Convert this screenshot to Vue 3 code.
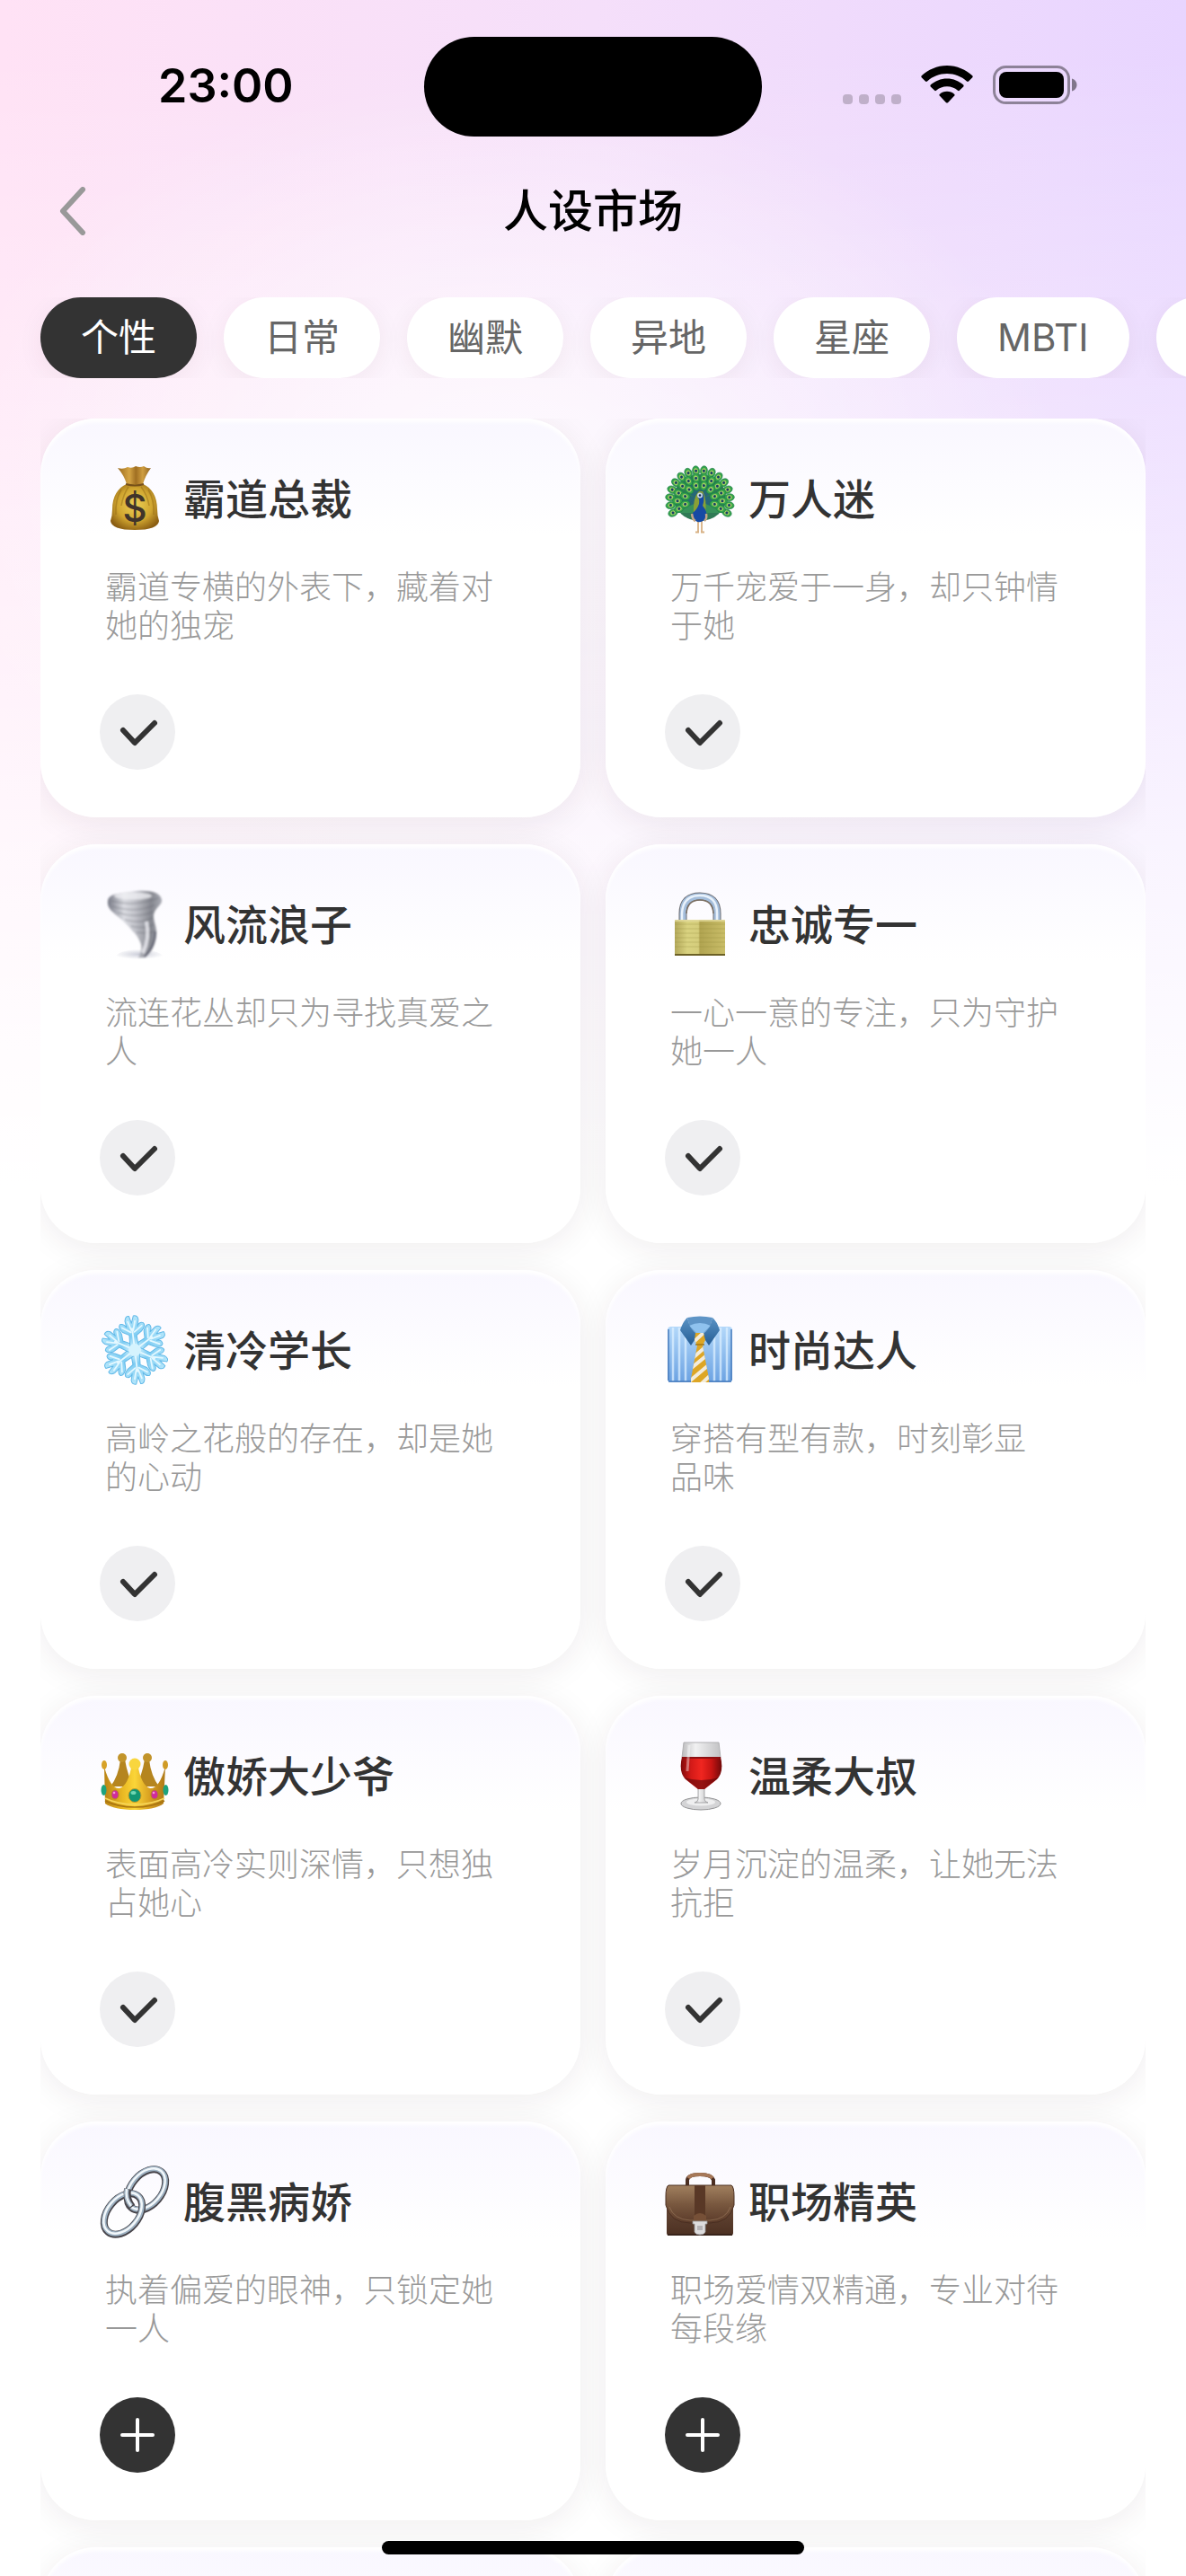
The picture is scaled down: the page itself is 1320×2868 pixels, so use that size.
<template>
  <main class="page">
    <!-- STATUS BAR -->
    <div class="status">
      <span class="status-time">23:00</span>
      <span class="island"></span>
      <div class="status-icons">
        <span class="signal"><i v-for="n in 4" :key="n"></i></span>
        <svg class="wifi" viewBox="0 0 58 43" aria-hidden="true">
          <path d="M29 0C40 0 50 4.500 57.500 11.500Q58 12.500 57.300 13.300L53 17.600Q52 18.400 51 17.500C45 12 37.500 9 29 9S13 12 7 17.500Q6 18.400 5 17.600L.7 13.300Q0 12.500.5 11.500C8 4.500 18 0 29 0Z" />
          <path d="M29 14.500C36 14.500 42.500 17.200 47.300 21.600Q48 22.500 47.300 23.400L42.800 27.800Q41.900 28.500 41 27.700C37.700 24.800 33.600 23.200 29 23.200S20.300 24.800 17 27.700Q16.100 28.500 15.200 27.800L10.700 23.400Q10 22.500 10.700 21.600C15.500 17.200 22 14.500 29 14.500Z" />
          <path d="M29 28.800C32.200 28.800 35 30 37.300 31.900Q38 32.800 37.300 33.600L30 41.200Q29 42 28 41.200L20.700 33.600Q20 32.800 20.700 31.900C23 30 25.800 28.800 29 28.800Z" />
        </svg>
        <svg class="battery" viewBox="0 0 94 43" aria-hidden="true">
          <rect x="1.500" y="1.500" width="83" height="40" rx="13" fill="none" stroke="#000" stroke-opacity=".4" stroke-width="3" />
          <rect x="7" y="7" width="72" height="29" rx="8" />
          <path d="M88 14.500C91.500 15.500 93.500 18.500 93.500 21.500S91.500 27.500 88 28.500Z" fill-opacity=".45" />
        </svg>
      </div>
    </div>

    <!-- NAV -->
    <header class="nav">
      <button class="back" type="button" aria-label="返回">
        <svg viewBox="0 0 30 54" aria-hidden="true"><path d="M26 3 4 27 26 51" /></svg>
      </button>
      <h1 class="nav-title">人设市场</h1>
    </header>

    <nav class="tabs">
      <button
        v-for="tab in tabs"
        :key="tab"
        type="button"
        class="tab"
        :class="{ 'tab--active': tab === activeTab }"
        @click="activeTab = tab"
      >
        {{ tab }}
      </button>
      <span class="tab tab--next"></span>
    </nav>

    <!-- PERSONA LIST -->
    <section class="grid">
      <article v-for="item in personas" :key="item.name" class="card">
        <div class="card-head">
          <svg class="emoji" viewBox="0 0 78 78" aria-hidden="true">
            <template v-if="item.icon === 'bag'">
              <defs>
                <radialGradient id="bagBody" cx=".5" cy=".45" r=".6">
                  <stop offset="0" stop-color="#ecd055" />
                  <stop offset=".6" stop-color="#d0a52f" />
                  <stop offset="1" stop-color="#8a5d12" />
                </radialGradient>
                <linearGradient id="bagTop">
                  <stop offset="0" stop-color="#9a6a1e" />
                  <stop offset=".35" stop-color="#d4a444" />
                  <stop offset=".55" stop-color="#a06f22" />
                  <stop offset=".75" stop-color="#cf9d40" />
                  <stop offset="1" stop-color="#8f6320" />
                </linearGradient>
              </defs>
              <path d="M20 4Q26 6 31 3Q36 5 40 2Q45 4 49 2Q53 5 57 4Q51 12 48 22L30 22Q27 12 20 4Z" fill="url(#bagTop)" />
              <path d="M30 22H48C58 26 64 36 64 50Q64 57 66 63Q65 73 39 73Q13 73 12 63Q14 57 14 50C14 36 20 26 30 22Z" fill="url(#bagBody)" />
              <path d="M24 28Q17 40 18 56M32 25Q26 34 24 46M46 25Q53 34 55 46M54 28Q61 40 60 56" fill="none" stroke="#8f6615" stroke-opacity=".45" stroke-width="1.500" />
              <path d="M29 22Q39 25 49 22" fill="none" stroke="#76501a" stroke-width="2" />
              <text class="dollar" x="39" y="64" text-anchor="middle">$</text>
            </template>

            <template v-else-if="item.icon === 'peacock'">
              <ellipse cx="39" cy="37" rx="29" ry="26" fill="#2f7a55" />
              <path d="M14 54H64L56 44H22Z" fill="#37915a" />
              <g v-for="(f, i) in feathers" :key="i" :transform="`translate(39 40) rotate(${f.angle})`">
                <path :d="`M0 0V${-f.r}`" stroke="#27667a" stroke-width="1.500" />
                <ellipse :cy="-f.r" rx="4" ry="5.500" fill="#35a44c" stroke="#1c7b46" stroke-width=".6" />
                <ellipse :cy="-f.r" rx="2.400" ry="3" fill="#a5cf62" />
                <circle :cy="-f.r" r="1.500" fill="#173f68" />
              </g>
              <path d="M38 30Q31 36 32 56L45 57Q47 38 42 30Z" fill="#8aa036" />
              <path d="M37 62V75M41 62V75M34 75.500H38M40 75.500H44" stroke="#d8b184" stroke-width="1.800" />
              <path d="M36 34Q40 29 43 34Q44 41 42 46Q48 53 46 60Q42 65 36 64Q30 61 31 54Q36 50 38 44Q39 38 36 36Z" fill="#164aa3" />
              <path d="M30 55Q31 62 34 63M46 55Q47 61 44 63" fill="none" stroke="#c6a786" stroke-width="2.500" />
              <circle cx="39" cy="34.500" r="3" fill="#c9d9e6" />
              <circle cx="39" cy="34.500" r="1.300" fill="#122a54" />
            </template>

            <template v-else-if="item.icon === 'tornado'">
              <defs>
                <linearGradient id="windBody">
                  <stop offset="0" stop-color="#777985" />
                  <stop offset=".3" stop-color="#dcdde3" />
                  <stop offset=".5" stop-color="#c3c4cb" />
                  <stop offset=".8" stop-color="#85878f" />
                  <stop offset="1" stop-color="#a9abb4" />
                </linearGradient>
                <filter id="windSoft"><feGaussianBlur stdDeviation="1" /></filter>
                <radialGradient id="windDust">
                  <stop offset="0" stop-color="#b9bccb" />
                  <stop offset="1" stop-color="#b9bccb" stop-opacity="0" />
                </radialGradient>
              </defs>
              <path d="M16 77A25 10 0 0 1 72 77Z" fill="url(#windDust)" fill-opacity=".7" />
              <g filter="url(#windSoft)">
                <path d="M9 12C10 3 26 3 42 1C60 0 68 4 69 11C70 17 60 20 60 29C60 36 64 42 63 50C62 62 57 70 50 75H43C47 68 47 62 45 58C42 51 40 49 36 45C32 40 26 34 21 30C14 24 8 20 9 12Z" fill="url(#windBody)" />
                <path d="M13 12Q38 19 65 9M14 18Q38 26 61 17M20 25Q40 32 60 24M28 33Q44 38 59 31M35 40Q50 44 60 38M41 47Q52 49 61 46" fill="none" stroke="#64666f" stroke-opacity=".35" stroke-width="1.500" />
                <path d="M62 46Q62 62 50 74" fill="none" stroke="#5e6070" stroke-width="2" />
                <path d="M52 35Q56 54 48 70" fill="none" stroke="#f3f3f8" stroke-width="4" stroke-opacity=".75" />
                <ellipse cx="37" cy="6.500" rx="21" ry="4" fill="#f1f1f5" fill-opacity=".75" />
              </g>
            </template>

            <template v-else-if="item.icon === 'lock'">
              <defs>
                <linearGradient id="lockBody">
                  <stop offset="0" stop-color="#b3a85a" />
                  <stop offset=".25" stop-color="#d9d280" />
                  <stop offset=".47" stop-color="#d5cd7c" />
                  <stop offset=".5" stop-color="#b1a451" />
                  <stop offset="1" stop-color="#c9bd68" />
                </linearGradient>
              </defs>
              <path d="M20 36V26Q20 7 39 7T58 26V36" fill="none" stroke="#6d6c70" stroke-width="9" />
              <path d="M20 36V26Q20 7 39 7T58 26V36" fill="none" stroke="#a3bddb" stroke-width="7" />
              <path d="M19 36V26Q20 6 39 6T58 26V36" fill="none" stroke="#e9f2fb" stroke-width="2.500" />
              <path d="M24 26Q25 11 39 11T54 26" fill="none" stroke="#7b6f62" stroke-width="1.500" />
              <rect x="11" y="33" width="56" height="40" rx="1" fill="url(#lockBody)" />
              <path d="M11 38H67M11 43H67M11 48H67M11 53H67M11 58H67M11 63H67" stroke="#8f8438" stroke-opacity=".3" />
              <path d="M11 34H67" stroke="#e4dda0" stroke-width="1.500" />
              <path d="M11 71H67V73H11Z" fill="#6b6025" />
            </template>

            <template v-else-if="item.icon === 'snow'">
              <defs>
                <radialGradient id="snowArm" gradientUnits="userSpaceOnUse" cx="0" cy="0" r="38">
                  <stop offset="0" stop-color="#eafaff" />
                  <stop offset=".4" stop-color="#7fcdf3" />
                  <stop offset="1" stop-color="#b4e6fb" />
                </radialGradient>
              </defs>
              <g v-for="n in 6" :key="n" :transform="`translate(39 38) rotate(${n * 60 - 7})`">
                <g fill="url(#snowArm)" stroke="#62b9e8" stroke-width="1" stroke-linejoin="round">
                  <path d="M-5 0 -4 -17 -11 -21Q-16 -27 -13 -30Q-9 -31 -6 -26L-7 -33Q-6 -39 -2 -38L0 -30 3 -38Q8 -38 8 -33L6 -26Q9 -31 13 -29Q16 -26 10 -20L4 -16 5 0Z" />
                </g>
                <path d="M0 -4V-24M-1 -22 -4 -32M1 -22 4 -32M-2 -20 -11 -26M2 -20 11 -26" fill="none" stroke="#e4f8ff" stroke-width="1.800" stroke-linecap="round" />
              </g>
              <circle cx="39" cy="38" r="7" fill="#d5f3fe" />
            </template>

            <template v-else-if="item.icon === 'shirt'">
              <defs>
                <linearGradient id="shirtBody" x2="0" y2="1">
                  <stop offset="0" stop-color="#b3d8fa" />
                  <stop offset="1" stop-color="#6ba2e2" />
                </linearGradient>
                <linearGradient id="shirtCollar" x2="0" y2="1">
                  <stop offset="0" stop-color="#5a93c5" />
                  <stop offset="1" stop-color="#245c94" />
                </linearGradient>
                <clipPath id="tieShape">
                  <path d="M34 19H43L45 27 42 33 49 70V74H29V70L36 33 33 27Z" />
                </clipPath>
              </defs>
              <rect x="3" y="12" width="72" height="62" rx="4" fill="url(#shirtBody)" />
              <path d="M9 13V73M16 13V73M23 20V73M55 20V73M62 13V73M69 13V73" stroke="#dcefff" stroke-opacity=".75" stroke-width="2.500" />
              <path d="M4 15V72M74 15V72M4 73H74" stroke="#4b7dbd" stroke-width="1.500" />
              <path d="M25 2Q39 -1 53 2L50 14 39 22 28 14Z" fill="#5e94c6" />
              <path d="M27 11Q39 5 51 11L39 23Z" fill="#8fc2ee" />
              <path d="M25 2Q20 6 17 16L29 33 37 21Q28 15 27 9Z" fill="url(#shirtCollar)" />
              <path d="M53 2Q58 6 61 16L49 33 41 21Q50 15 51 9Z" fill="url(#shirtCollar)" />
              <g clip-path="url(#tieShape)">
                <path d="M29 19H49V74H29Z" fill="#dda625" />
                <path d="M31 30 45 17M31 47 47 33M27 60 49 42M27 73 52 52M38 78 53 64" stroke="#f3ecdb" stroke-width="4" />
              </g>
              <path d="M34 32H44" stroke="#a67611" stroke-width="1.500" />
            </template>

            <template v-else-if="item.icon === 'crown'">
              <defs>
                <linearGradient id="crownBody">
                  <stop offset="0" stop-color="#b98315" />
                  <stop offset=".3" stop-color="#e9b823" />
                  <stop offset=".5" stop-color="#fbd538" />
                  <stop offset=".75" stop-color="#d89f20" />
                  <stop offset="1" stop-color="#ae7817" />
                </linearGradient>
              </defs>
              <path d="M12 50Q21 38 23 20H28Q31 38 38 50ZM40 50Q47 38 50 20H55Q57 38 66 50Z" fill="#b5851f" />
              <circle cx="25" cy="18" r="5" fill="#c2942b" />
              <circle cx="53" cy="18" r="5" fill="#c2942b" />
              <path d="M5 28Q12 53 22 52Q32 49 36 24H42Q46 49 56 52Q66 53 73 28L71 69Q62 76 39 76T6 69Z" fill="url(#crownBody)" />
              <ellipse cx="5" cy="26" rx="3" ry="5" fill="#d7a228" />
              <ellipse cx="73" cy="26" rx="3" ry="5" fill="#d09b26" />
              <circle cx="39" cy="25" r="6.500" fill="#f9d63e" />
              <path d="M6 66Q20 73 39 73T72 66" fill="none" stroke="#a97510" stroke-width="1.500" />
              <path d="M6 63Q20 70 39 70T72 63" fill="none" stroke="#f7d558" stroke-width="1.500" />
              <ellipse cx="4.500" cy="54" rx="3" ry="6" fill="#1da37d" />
              <ellipse cx="73.500" cy="54" rx="3" ry="6" fill="#1da37d" />
              <ellipse cx="39" cy="60" rx="7" ry="7.500" fill="#129672" stroke="#c99a29" />
              <ellipse cx="37.500" cy="57" rx="3" ry="2" fill="#6ed6b2" />
              <ellipse cx="17" cy="59" rx="4" ry="5" fill="#cf2c9c" stroke="#b88522" />
              <ellipse cx="61" cy="59" rx="4" ry="5" fill="#cf2c9c" stroke="#b88522" />
              <circle cx="16" cy="57" r="1.300" fill="#f497d2" />
              <circle cx="60" cy="57" r="1.300" fill="#f497d2" />
            </template>

            <template v-else-if="item.icon === 'wine'">
              <defs>
                <linearGradient id="wineRed">
                  <stop offset="0" stop-color="#7e0a0c" />
                  <stop offset=".25" stop-color="#d31a18" />
                  <stop offset=".5" stop-color="#f02620" />
                  <stop offset=".75" stop-color="#c91513" />
                  <stop offset="1" stop-color="#6f0809" />
                </linearGradient>
                <linearGradient id="wineGlass">
                  <stop offset="0" stop-color="#bcbcbe" />
                  <stop offset=".35" stop-color="#f1f1f2" />
                  <stop offset="1" stop-color="#c2c2c4" />
                </linearGradient>
              </defs>
              <ellipse cx="40" cy="69" rx="22" ry="7" fill="#d4d4d6" stroke="#949496" />
              <ellipse cx="40" cy="67.500" rx="16" ry="4" fill="#efeff0" />
              <path d="M37 50H44V64Q44 67 48 68H33Q37 67 37 64Z" fill="url(#wineGlass)" stroke="#98989a" stroke-width=".8" />
              <path d="M21 1H60L62 18H19Z" fill="url(#wineGlass)" stroke="#b0b0b2" />
              <path d="M19 17H62Q66 34 58 42Q48 50 44 53H37Q33 50 23 42Q15 34 19 17Z" fill="url(#wineRed)" />
              <path d="M21 40Q31 48 37 53H44Q50 48 60 40Q50 43 40.500 43T21 40Z" fill="#4d0607" fill-opacity=".55" />
              <path d="M20 18H61" stroke="#8e1012" stroke-width="2" />
              <path d="M27 4 25 33" stroke="#fff" stroke-opacity=".4" stroke-width="3" />
            </template>

            <template v-else-if="item.icon === 'link'">
              <g fill="none">
                <g v-for="c in linkRings" :key="c.x" :transform="`translate(${c.x} ${c.y}) rotate(40)`">
                  <ellipse rx="17" ry="26" stroke="#47444a" stroke-width="8" />
                  <ellipse cx="-.5" cy="-.5" rx="17" ry="26" stroke="#9db1c2" stroke-width="5.500" />
                  <ellipse cx="-1" cy="-.5" rx="17" ry="26" stroke="#f3f8fb" stroke-width="2.500" />
                </g>
                <path d="M31 24Q29 35 36 44" stroke="#48454b" stroke-width="8" />
                <path d="M30 24Q28 35 35 43" stroke="#aabccb" stroke-width="5" />
                <path d="M30 24Q28 35 35 43" stroke="#f3f8fb" stroke-width="2" />
              </g>
            </template>

            <template v-else>
              <defs>
                <linearGradient id="caseBody" x2="0" y2="1">
                  <stop offset="0" stop-color="#765742" />
                  <stop offset="1" stop-color="#4c3022" />
                </linearGradient>
                <linearGradient id="caseFlap" x2="0" y2="1">
                  <stop offset="0" stop-color="#a1805f" />
                  <stop offset=".5" stop-color="#79583f" />
                  <stop offset="1" stop-color="#5b3b2a" />
                </linearGradient>
              </defs>
              <path d="M25 20V14Q26 8 39 8T54 14V20" fill="none" stroke="#4c2f22" stroke-width="4" />
              <path d="M26 12Q28 8 39 8T53 12" fill="none" stroke="#a67858" stroke-width="4" />
              <rect x="2" y="20" width="74" height="56" rx="3" fill="url(#caseBody)" />
              <path d="M4 20H74Q77 22 77 32V42Q72 62 50 62H28Q6 62 1 42V32Q1 22 4 20Z" fill="url(#caseFlap)" stroke="#4a2e21" />
              <path d="M5 44Q10 58 28 59H50Q68 58 73 44" fill="none" stroke="#a48465" stroke-opacity=".55" />
              <path d="M33 20H45V62H33Z" fill="#593826" />
              <path d="M32 62V54Q39 48 46 54V62Z" fill="#765037" />
              <path d="M3 75H75" stroke="#38231a" stroke-width="2" />
              <path d="M31 60H47V63H45V72Q44 75 39 75T33 72V63H31Z" fill="#dddcdd" stroke="#9b999b" stroke-width=".8" />
              <rect x="36" y="65" width="6" height="5" fill="#b5b3b5" />
            </template>
          </svg>
          <h2 class="card-title">{{ item.name }}</h2>
        </div>
        <p class="card-desc">{{ item.desc }}</p>
        <button
          type="button"
          class="pick"
          :class="{ 'pick--add': !item.added }"
          :aria-label="item.added ? '已添加' : '添加'"
          @click="item.added = !item.added"
        >
          <svg viewBox="0 0 84 84" aria-hidden="true">
            <path v-if="item.added" d="M26 40 39 54 61 32" />
            <path v-else d="M42 25V59M25 42H59" />
          </svg>
        </button>
      </article>
      <!-- next row, only its top edge peeks in -->
      <article v-for="n in 2" :key="n" class="card"></article>
    </section>

    <span class="home-bar"></span>
  </main>
</template>

<script setup>
import { reactive, ref } from "vue";

const tabs = ["个性", "日常", "幽默", "异地", "星座", "MBTI"];
const activeTab = ref("个性");

const personas = reactive([
  { name: "霸道总裁", icon: "bag", desc: "霸道专横的外表下，藏着对\n她的独宠", added: true },
  { name: "万人迷", icon: "peacock", desc: "万千宠爱于一身，却只钟情\n于她", added: true },
  { name: "风流浪子", icon: "tornado", desc: "流连花丛却只为寻找真爱之\n人", added: true },
  { name: "忠诚专一", icon: "lock", desc: "一心一意的专注，只为守护\n她一人", added: true },
  { name: "清冷学长", icon: "snow", desc: "高岭之花般的存在，却是她\n的心动", added: true },
  { name: "时尚达人", icon: "shirt", desc: "穿搭有型有款，时刻彰显\n品味", added: true },
  { name: "傲娇大少爷", icon: "crown", desc: "表面高冷实则深情，只想独\n占她心", added: true },
  { name: "温柔大叔", icon: "wine", desc: "岁月沉淀的温柔，让她无法\n抗拒", added: true },
  { name: "腹黑病娇", icon: "link", desc: "执着偏爱的眼神，只锁定她\n一人", added: false },
  { name: "职场精英", icon: "case", desc: "职场爱情双精通，专业对待\n每段缘", added: false },
]);

// peacock tail: three fans of feathers, outermost first
const feathers = [
  { r: 33, count: 16, spread: 115 },
  { r: 25, count: 12, spread: 112 },
  { r: 17, count: 8, spread: 105 },
].flatMap(({ r, count, spread }) =>
  Array.from({ length: count }, (_, i) => ({
    r,
    angle: -spread + (2 * spread * i) / (count - 1),
  }))
);

const linkRings = [
  { x: 52, y: 25 },
  { x: 26, y: 52 },
];
</script>

<style>
body {
  margin: 0;
}
</style>

<style scoped>
.page {
  position: relative;
  display: flex;
  flex-direction: column;
  height: 100vh;
  overflow: hidden;
  background:
    radial-gradient(ellipse 48% 16% at 42% 19%, rgba(255, 255, 255, 0.8), rgba(255, 255, 255, 0.5) 40%, rgba(255, 255, 255, 0)),
    linear-gradient(rgba(255, 255, 255, 0) 2%, rgba(255, 255, 255, 0.3) 16%, rgba(255, 255, 255, 0.75) 33%, #fff 46%),
    linear-gradient(90deg, #ffe2f5, #f5dffa 50%, #e8d5ff);
  color: #333;
  font-family: Inter, "Noto Sans CJK SC", sans-serif;
}

button {
  border: 0;
  padding: 0;
  font: inherit;
  cursor: pointer;
}

/* status bar */
.status {
  display: grid;
  grid-template-columns: 1fr 376px 1fr;
  flex: none;
  height: 176px;
  box-sizing: border-box;
  padding-top: 41px;
  color: #000;
}

.status-time {
  padding-left: 176px;
  font-size: 52px;
  font-weight: 600;
  line-height: 110px;
}

.island {
  height: 111px;
  border-radius: 56px;
  background: #000;
}

.status-icons {
  display: flex;
  justify-content: flex-end;
  gap: 22px;
  height: 43px;
  padding: 32px 121px 0 0;
}

.signal {
  display: flex;
  align-items: flex-end;
  gap: 7px;
}

.signal i {
  width: 11px;
  height: 11px;
  border-radius: 4px;
  background: rgba(0, 0, 0, 0.2);
}

.wifi {
  width: 58px;
  height: 43px;
}

.battery {
  width: 94px;
  height: 43px;
}

/* nav */
.nav {
  display: grid;
  grid-template-columns: 1fr auto 1fr;
  align-items: center;
  flex: none;
  height: 118px;
}

.back {
  justify-self: start;
  margin-left: 66px;
  background: none;
}

.back svg {
  display: block;
  width: 30px;
  height: 54px;
  fill: none;
  stroke: #999;
  stroke-width: 6;
  stroke-linecap: round;
  stroke-linejoin: round;
}

.nav-title {
  margin: 0;
  color: #000;
  font-size: 50px;
  font-weight: 500;
  line-height: 72px;
}

/* tabs */
.tabs {
  display: flex;
  flex: none;
  gap: 30px;
  margin-top: 37px;
  padding-left: 45px;
  overflow: hidden;
}

.tab {
  flex: none;
  height: 90px;
  padding: 0 45px;
  border-radius: 45px;
  background: #fff;
  box-shadow: 0 6px 30px rgba(60, 20, 40, 0.06);
  color: #666;
  font-size: 42px;
  line-height: 90px;
}

.tab--active {
  background: #333;
  color: #fff;
}

.tab--next {
  width: 84px;
}

/* cards */
.grid {
  display: grid;
  grid-template-columns: 1fr 1fr;
  grid-auto-rows: 444px;
  flex: 1;
  gap: 30px 28px;
  min-height: 0;
  margin: 45px 45px 0;
  overflow: hidden;
}

.card {
  box-sizing: border-box;
  padding: 51px 66px 0;
  border-radius: 62px;
  background: linear-gradient(#f9f7ff, #fff 130px);
  box-shadow: 0 6px 36px rgba(50, 25, 35, 0.08), inset 0 4px 4px #fff;
}

.card-head {
  display: flex;
  align-items: center;
  gap: 15px;
  height: 78px;
}

.emoji {
  flex: none;
  width: 78px;
  height: 78px;
  overflow: visible;
}

.dollar {
  fill: #40342a;
  font-family: Inter, sans-serif;
  font-size: 42px;
  font-weight: 500;
}

.card-title {
  margin: 0;
  font-size: 47px;
  font-weight: 500;
  line-height: 70px;
  white-space: nowrap;
}

.card-desc {
  height: 86px;
  margin: 38px 0 54px;
  padding-left: 6px;
  color: #999;
  font-size: 36px;
  font-weight: 300;
  line-height: 43px;
  white-space: pre;
}

.pick {
  display: block;
  width: 84px;
  height: 84px;
  border-radius: 50%;
  background: #efeff1;
}

.pick svg {
  display: block;
  fill: none;
  stroke: #333;
  stroke-width: 6;
  stroke-linecap: round;
  stroke-linejoin: round;
}

.pick--add {
  background: #333;
}

.pick--add svg {
  stroke: #fff;
  stroke-width: 4;
}

.home-bar {
  position: absolute;
  bottom: 24px;
  left: 50%;
  width: 470px;
  height: 15px;
  border-radius: 8px;
  background: #000;
  transform: translateX(-50%);
}
</style>
